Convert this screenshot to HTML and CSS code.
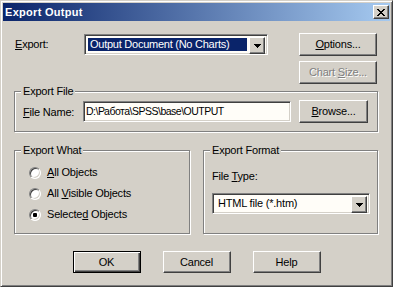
FILE: index.html
```html
<!DOCTYPE html>
<html>
<head>
<meta charset="utf-8">
<title>Export Output</title>
<link rel="stylesheet" href="styles.css">
</head>
<body>
<div class="window">
  <div class="titlebar">
    <span class="title">Export Output</span>
    <span class="close-btn raised">
      <svg width="8" height="7" viewBox="0 0 8 7" shape-rendering="crispEdges">
        <path d="M0 0h2v1h-2z M6 0h2v1h-2z M1 1h2v1h-2z M5 1h2v1h-2z M2 2h4v1h-4z M3 3h2v1h-2z M2 4h4v1h-4z M1 5h2v1h-2z M5 5h2v1h-2z M0 6h2v1h-2z M6 6h2v1h-2z" fill="#000"/>
      </svg>
    </span>
  </div>

  <div class="content">
    <div class="top-row">
      <span class="lbl lbl-export"><u>E</u>xport:</span>
      <div class="combo combo-export">
        <div class="combo-field"><span class="combo-sel">Output Document (No Charts)</span></div>
        <span class="drop-btn raised">
          <svg width="7" height="4" viewBox="0 0 7 4" shape-rendering="crispEdges"><path d="M0 0h7v1h-7z M1 1h5v1h-5z M2 2h3v1h-3z M3 3h1v1h-1z" fill="#000"/></svg>
        </span>
      </div>
      <div class="side-buttons">
        <span class="btn raised btn-side"><span><u>O</u>ptions...</span></span>
        <span class="btn raised btn-side disabled"><span>Chart <u>S</u>ize...</span></span>
      </div>
    </div>

    <div class="group group-file">
      <div class="legend">Export File</div>
      <div class="file-row">
        <span class="lbl lbl-file"><u>F</u>ile Name:</span>
        <div class="textbox">D:\Работа\SPSS\base\OUTPUT</div>
        <span class="btn raised btn-browse"><span><u>B</u>rowse...</span></span>
      </div>
    </div>

    <div class="group-row">
      <div class="group group-what">
        <div class="legend">Export What</div>
        <div class="radio-list">
          <div class="radio-row"><span class="radio"></span><span><u>A</u>ll Objects</span></div>
          <div class="radio-row"><span class="radio"></span><span>All <u>V</u>isible Objects</span></div>
          <div class="radio-row"><span class="radio checked"></span><span>Selecte<u>d</u> Objects</span></div>
        </div>
      </div>
      <div class="group group-format">
        <div class="legend">Export Format</div>
        <div class="format-body">
          <span class="lbl lbl-type">File <u>T</u>ype:</span>
          <div class="combo combo-type">
            <div class="combo-field"><span class="combo-text">HTML file (*.htm)</span></div>
            <span class="drop-btn raised">
              <svg width="7" height="4" viewBox="0 0 7 4" shape-rendering="crispEdges"><path d="M0 0h7v1h-7z M1 1h5v1h-5z M2 2h3v1h-3z M3 3h1v1h-1z" fill="#000"/></svg>
            </span>
          </div>
        </div>
      </div>
    </div>
  </div>

  <div class="footer">
    <span class="btn raised btn-foot btn-default"><span>OK</span></span>
    <span class="btn raised btn-foot"><span>Cancel</span></span>
    <span class="btn raised btn-foot"><span>Help</span></span>
  </div>
</div>
</body>
</html>
```

FILE: styles.css
```css
* {
  box-sizing: border-box;
}

html, body {
  margin: 0;
  padding: 0;
}

body {
  width: 393px;
  height: 287px;
  background: #d4d0c8;
  font-family: "Liberation Sans", Arial, sans-serif;
  font-size: 11px;
  line-height: 13px;
  letter-spacing: -0.2px;
  color: #000;
  overflow: hidden;
}

u {
  text-decoration: underline;
  text-underline-offset: 1px;
}

.window {
  width: 393px;
  height: 287px;
  background: #d4d0c8;
  border: 1px solid;
  border-color: #d4d0c8 #404040 #404040 #d4d0c8;
  box-shadow: inset 1px 1px 0 #fff, inset -1px -1px 0 #808080;
  padding: 2px;
  display: flex;
  flex-direction: column;
}

.raised {
  background: #d4d0c8;
  border: 1px solid;
  border-color: #fff #404040 #404040 #fff;
  box-shadow: inset -1px -1px 0 #808080, inset 1px 1px 0 #d4d0c8;
}

.titlebar {
  height: 18px;
  flex: none;
  background: linear-gradient(to right, #0a246a, #a6caf0);
  display: flex;
  align-items: center;
  justify-content: space-between;
  padding: 0 1px 0 2px;
}

.title {
  color: #fff;
  font-weight: bold;
  letter-spacing: 0.3px;
}

.close-btn {
  width: 16px;
  height: 14px;
  display: flex;
  align-items: center;
  justify-content: center;
  padding-right: 1px;
}

.content {
  padding: 12px 12px 0 11px;
}

.top-row {
  display: flex;
  align-items: flex-start;
  padding: 0 1px;
  height: 51px;
}

.lbl {
  display: block;
  white-space: nowrap;
}

.lbl-export {
  width: 69px;
  margin-top: 5px;
}

.combo {
  height: 21px;
  display: flex;
  border: 1px solid;
  border-color: #808080 #fff #fff #808080;
  box-shadow: inset 1px 1px 0 #404040, inset -1px -1px 0 #d4d0c8;
  background: #fffdf8;
  padding: 2px;
}

.combo-export {
  width: 184px;
  margin-top: 1px;
}

.combo-field {
  flex: 1;
  display: flex;
  padding: 1px 2px 1px 1px;
}

.combo-sel {
  flex: 1;
  background: #0a246a;
  color: #fff;
  padding-left: 2px;
  white-space: nowrap;
  overflow: hidden;
  line-height: 13px;
  letter-spacing: -0.25px;
}

.combo-text {
  padding-left: 2px;
  white-space: nowrap;
  line-height: 13px;
}

.drop-btn {
  width: 16px;
  height: 17px;
  display: flex;
  align-items: center;
  justify-content: center;
  flex: none;
}

.side-buttons {
  margin-left: auto;
  width: 78px;
  display: flex;
  flex-direction: column;
  gap: 5px;
}

.btn {
  display: flex;
  align-items: center;
  justify-content: center;
  white-space: nowrap;
}

.btn-side {
  height: 23px;
}

.btn.disabled {
  color: #808080;
  text-shadow: 1px 1px 0 #fff;
}

.group {
  border: 1px solid #808080;
  box-shadow: inset 1px 1px 0 #fff, 1px 1px 0 #fff;
}

.legend {
  width: max-content;
  margin: -7px 0 0 6px;
  padding: 0 2px;
  background: #d4d0c8;
  line-height: 13px;
  position: relative;
}

.group-file {
  margin-top: 7px;
  padding-bottom: 8px;
}

.file-row {
  display: flex;
  align-items: flex-start;
  margin-top: 2px;
  padding: 0 8px;
}

.lbl-file {
  width: 60px;
  margin-top: 6px;
}

.textbox {
  width: 208px;
  height: 21px;
  margin-top: 1px;
  border: 1px solid;
  border-color: #808080 #fff #fff #808080;
  box-shadow: inset 1px 1px 0 #404040, inset -1px -1px 0 #d4d0c8;
  background: #fffdf8;
  padding: 3px 0 0 2px;
  white-space: nowrap;
  font-size: 10.5px;
  letter-spacing: -0.5px;
}

.btn-browse {
  width: 69px;
  height: 23px;
  margin-left: 8px;
}

.group-row {
  display: grid;
  grid-template-columns: 176px 175px;
  column-gap: 13px;
  margin-top: 18px;
}

.group-what,
.group-format {
  height: 84px;
}

.radio-list {
  margin-top: 5px;
  padding-left: 14px;
}

.radio-row {
  height: 21px;
  display: flex;
  align-items: center;
  gap: 6px;
  white-space: nowrap;
}

.radio {
  width: 12px;
  height: 12px;
  border-radius: 50%;
  border: 1px solid;
  border-color: #808080 #fff #fff #808080;
  box-shadow: inset 1px 1px 0 #404040, inset -1px -1px 0 #d4d0c8;
  background: #fff;
  display: flex;
  align-items: center;
  justify-content: center;
  flex: none;
}

.radio.checked::after {
  content: "";
  width: 4px;
  height: 4px;
  border-radius: 1px;
  background: #000;
}

.format-body {
  padding-left: 8px;
}

.lbl-type {
  margin-top: 13px;
}

.combo-type {
  width: 158px;
  margin-top: 10px;
}

.footer {
  display: flex;
  justify-content: center;
  gap: 22px;
  margin-top: 17px;
}

.btn-foot {
  width: 68px;
  height: 22px;
}

.btn-default {
  border: 1px solid #000;
  box-shadow: inset 1px 1px 0 #fff, inset -1px -1px 0 #404040, inset -2px -2px 0 #808080;
}
```
